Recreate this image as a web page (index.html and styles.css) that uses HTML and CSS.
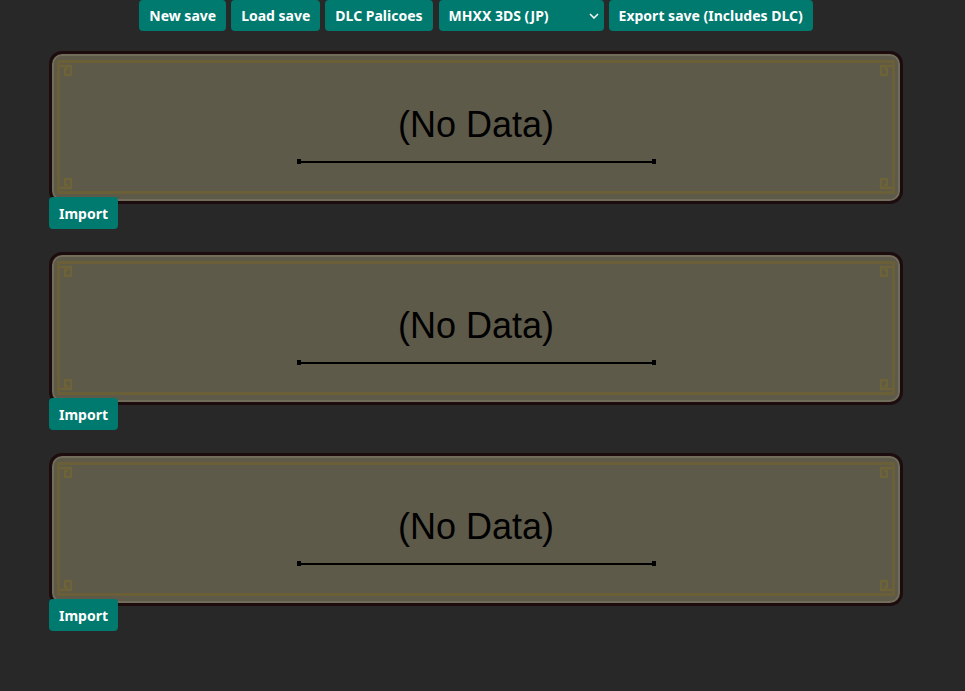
FILE: index.html
```html
<!DOCTYPE html>
<html lang="en">
<head>
    <meta charset="UTF-8">
    <meta name="viewport" content="width=device-width, initial-scale=1.0">
    <title>Palico Save Editor</title>
    <link rel="stylesheet" href="styles.css">
</head>
<body>

    <div class="toolbar">
        <button class="btn">New save</button>
        <button class="btn">Load save</button>
        <button class="btn">DLC Palicoes</button>
        <span class="select-wrap">
            <select class="btn game-select">
                <option>MHXX 3DS (JP)</option>
                <option>MHGU 3DS</option>
                <option>MHGU Switch</option>
            </select>
            <svg class="chevron" width="10" height="6" viewBox="0 0 10 6"><path d="M1 1l4 4 4-4" fill="none" stroke="#fff" stroke-width="1.5"/></svg>
        </span>
        <button class="btn">Export save (Includes DLC)</button>
    </div>

    <div class="slots" id="slots"></div>

    <script>
        var slots = document.getElementById("slots");

        function corner(cls) {
            return '<svg class="curl ' + cls + '" width="13" height="13" viewBox="0 0 13 13">' +
                '<path d="M0 3H11V12H5V6H8" fill="none" stroke="#6e6237" stroke-width="2.5"/></svg>';
        }

        for (var i = 0; i < 3; i++) {
            var slot = document.createElement("div");
            slot.className = "slot";
            slot.innerHTML =
                '<div class="card">' +
                    '<div class="frame">' + corner("tl") + corner("tr") + corner("bl") + corner("br") + '</div>' +
                    '<div class="card-name">(No Data)</div>' +
                    '<div class="card-line"></div>' +
                '</div>' +
                '<button class="btn import-btn">Import</button>';
            slots.appendChild(slot);
        }
    </script>
</body>
</html>
```

FILE: styles.css
```css
body {
    margin: 0;
    background-color: #282828;
    font-family: "Noto Sans", "Open Sans", sans-serif;
    min-height: 100vh;
}

.toolbar {
    display: flex;
    justify-content: center;
    gap: 5px;
    width: 854px;
    margin-left: 49px;
}

.btn {
    background-color: #00796f;
    color: #ffffff;
    font-family: "Noto Sans", "Open Sans", sans-serif;
    font-weight: bold;
    font-size: 14px;
    border: none;
    border-radius: 4px;
    padding: 0 10px;
    height: 31px;
    cursor: pointer;
}

.select-wrap {
    position: relative;
    display: inline-block;
    margin-left: 1px;
}

.game-select {
    -webkit-appearance: none;
    appearance: none;
    width: 165px;
    text-align: left;
    outline: none;
}

.chevron {
    position: absolute;
    right: 5px;
    top: 13px;
    pointer-events: none;
}

.slots {
    display: flex;
    flex-direction: column;
    gap: 23px;
    width: 854px;
    margin-left: 49px;
    margin-top: 20px;
}

.slot {
    display: flex;
    flex-direction: column;
    align-items: flex-start;
}

.card {
    position: relative;
    box-sizing: border-box;
    width: 100%;
    height: 153px;
    background-color: #5e5a4a;
    border: 3px solid #1d0c0d;
    border-radius: 13px;
    box-shadow: inset 0 0 0 2px #726d5a;
    display: flex;
    flex-direction: column;
    align-items: center;
    padding-top: 51px;
}

.frame {
    position: absolute;
    top: 6px;
    left: 5px;
    right: 5px;
    bottom: 7px;
    border: 3px solid #6a5f36;
    pointer-events: none;
}

.curl {
    position: absolute;
}

.curl.tl { top: 0; left: 0; }
.curl.tr { top: 0; right: 0; transform: scaleX(-1); }
.curl.bl { bottom: 0; left: 0; transform: scaleY(-1); }
.curl.br { bottom: 0; right: 0; transform: scale(-1, -1); }

.card-name {
    font-family: "Liberation Sans", Arial, sans-serif;
    font-size: 36px;
    line-height: 40px;
    color: #000000;
}

.card-line {
    position: relative;
    width: 359px;
    height: 2px;
    margin-top: 16px;
    background-color: #000000;
}

.card-line::before,
.card-line::after {
    content: "";
    position: absolute;
    top: -2px;
    width: 4px;
    height: 5px;
    background-color: #000000;
}

.card-line::before { left: 0; }
.card-line::after { right: 0; }

.import-btn {
    margin-top: -7px;
    position: relative;
    height: 32px;
}
```
